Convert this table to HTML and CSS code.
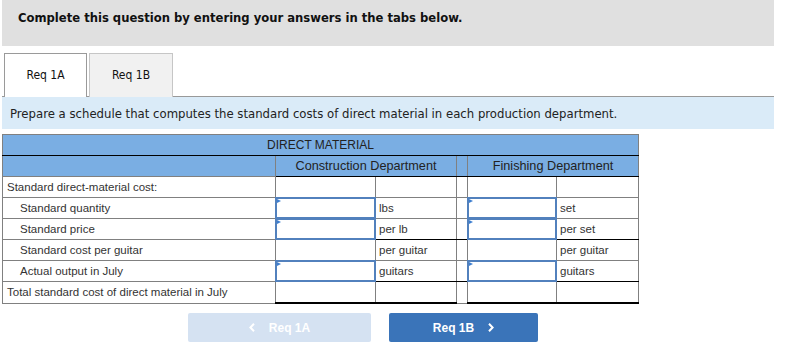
FILE: index.html
```html
<!DOCTYPE html>
<html>
<head>
<meta charset="utf-8">
<link rel="stylesheet" href="styles.css">
</head>
<body>
<div class="page">
  <div class="banner">Complete this question by entering your answers in the tabs below.</div>
  <div class="tabs">
    <div class="tab active">Req 1A</div>
    <div class="tab">Req 1B</div>
  </div>
  <div class="prompt">Prepare a schedule that computes the standard costs of direct material in each production department.</div>
  <table class="sched">
    <colgroup>
      <col class="c-label"><col class="c-in1"><col class="c-unit1"><col class="c-sp"><col class="c-in2"><col class="c-unit2">
    </colgroup>
    <tr class="h1"><th colspan="6">DIRECT MATERIAL</th></tr>
    <tr class="h2">
      <th class="lab"></th>
      <th colspan="2">Construction Department</th>
      <th class="sp"></th>
      <th colspan="2">Finishing Department</th>
    </tr>
    <tr class="r-gray">
      <td class="lab">Standard direct-material cost:</td>
      <td></td><td></td><td class="sp"></td><td></td><td></td>
    </tr>
    <tr class="r-gray">
      <td class="lab ind">Standard quantity</td>
      <td class="inp"><div class="box"></div></td><td class="unit">lbs</td><td class="sp"></td>
      <td class="inp"><div class="box"></div></td><td class="unit">set</td>
    </tr>
    <tr class="r-black">
      <td class="lab ind">Standard price</td>
      <td class="inp"><div class="box"></div></td><td class="unit">per lb</td><td class="sp"></td>
      <td class="inp"><div class="box"></div></td><td class="unit">per set</td>
    </tr>
    <tr class="r-gray">
      <td class="lab ind">Standard cost per guitar</td>
      <td></td><td class="unit">per guitar</td><td class="sp"></td>
      <td></td><td class="unit">per guitar</td>
    </tr>
    <tr class="r-black">
      <td class="lab ind">Actual output in July</td>
      <td class="inp"><div class="box"></div></td><td class="unit">guitars</td><td class="sp"></td>
      <td class="inp"><div class="box"></div></td><td class="unit">guitars</td>
    </tr>
    <tr class="r-total">
      <td class="lab">Total standard cost of direct material in July</td>
      <td></td><td></td><td class="sp"></td><td></td><td></td>
    </tr>
  </table>
  <div class="nav">
    <button class="btn prev"><svg width="6" height="9" viewBox="0 0 6 9"><path d="M5 0.8 L1.4 4.5 L5 8.2" fill="none" stroke="#fff" stroke-width="2"/></svg><span>Req 1A</span></button>
    <button class="btn next"><span>Req 1B</span><svg width="6" height="9" viewBox="0 0 6 9"><path d="M1 0.8 L4.6 4.5 L1 8.2" fill="none" stroke="#fff" stroke-width="2"/></svg></button>
  </div>
</div>
</body>
</html>
```
FILE: styles.css
```css
body {
  margin: 0;
  background: #fff;
  font-family: "DejaVu Sans Condensed", "DejaVu Sans", Verdana, sans-serif;
  font-stretch: condensed;
}
.page {
  width: 772px;
  margin-left: 2px;
}
.banner {
  height: 46px;
  box-sizing: border-box;
  background: #e0e0e0;
  padding: 10px 0 0 16px;
  font-weight: bold;
  font-size: 12.9px;
  line-height: 16px;
  color: #111;
}
.tabs {
  display: flex;
  gap: 2px;
  padding: 7px 0 0 2px;
  margin-bottom: -1px;
  position: relative;
}
.tab {
  width: 84px;
  height: 44px;
  box-sizing: border-box;
  border: 1px solid #c6c6c6;
  border-bottom: none;
  background: #f1f1f1;
  display: flex;
  align-items: center;
  justify-content: center;
  font-size: 12px;
  color: #111;
  padding-bottom: 2px;
}
.tab.active {
  width: 83px;
  background: #fff;
  border-color: #9a9a9a;
  position: relative;
  z-index: 1;
}
.prompt {
  height: 33px;
  box-sizing: border-box;
  border-top: 1px solid #999;
  background: #daebf8;
  padding: 0 0 0 8px;
  display: flex;
  align-items: center;
  font-size: 13px;
  color: #222;
}
.sched {
  margin-top: 5px;
  border-collapse: collapse;
  table-layout: fixed;
  font-family: "Liberation Sans", Arial, sans-serif;
  font-size: 11.5px;
  color: #333;
}
.c-label { width: 273px; }
.c-in1 { width: 100px; }
.c-unit1 { width: 81px; }
.c-sp { width: 11px; }
.c-in2 { width: 89px; }
.c-unit2 { width: 82px; }
.sched th, .sched td {
  height: 20px;
  padding: 0;
  border: 1px solid #808080;
  font-weight: normal;
  white-space: nowrap;
  overflow: visible;
}
.sched th {
  background: #7aaee3;
  color: #222;
  text-align: center;
  font-size: 12.7px;
}
.sched .h1 th { font-size: 12px; }
.h1 th { border-bottom: 1px solid #000; }
.h2 th { border-bottom: 1px solid #000; }
.h2 th.lab { border-bottom-color: #808080; }
.sched td.lab { padding-left: 4px; text-align: left; }
.sched td.lab.ind { padding-left: 17px; }
.sched td.unit { padding-left: 3px; }
.r-black td { border-bottom: 1px solid #000; }
.r-black td.lab { border-bottom-color: #808080; }
.r-total td { border-bottom: 2px solid #000; }
.r-total td.lab, .r-total td.sp { border-bottom: 1px solid #808080; }
.sched td.inp { position: relative; }
.box {
  position: absolute;
  top: -1px;
  left: -1px;
  right: -1px;
  bottom: -1px;
  border: 2px solid #5281bd;
  background: #fff;
}
.box::before {
  content: "";
  position: absolute;
  top: 0;
  left: 0;
  border-left: 4px solid #3f7fd0;
  border-top: 2px solid transparent;
  border-bottom: 2px solid transparent;
}
.nav {
  display: flex;
  gap: 18px;
  padding: 9px 0 0 186px;
}
.btn {
  height: 29px;
  border: none;
  border-radius: 2px;
  display: flex;
  align-items: center;
  justify-content: center;
  gap: 14px;
  font-family: "Liberation Sans", Arial, sans-serif;
  font-weight: bold;
  font-size: 12px;
  color: #fff;
  padding: 0;
}
.btn.prev {
  width: 183px;
  background: #d5e2f2;
}
.btn.next {
  width: 149px;
  background: #3a74b9;
}
```
